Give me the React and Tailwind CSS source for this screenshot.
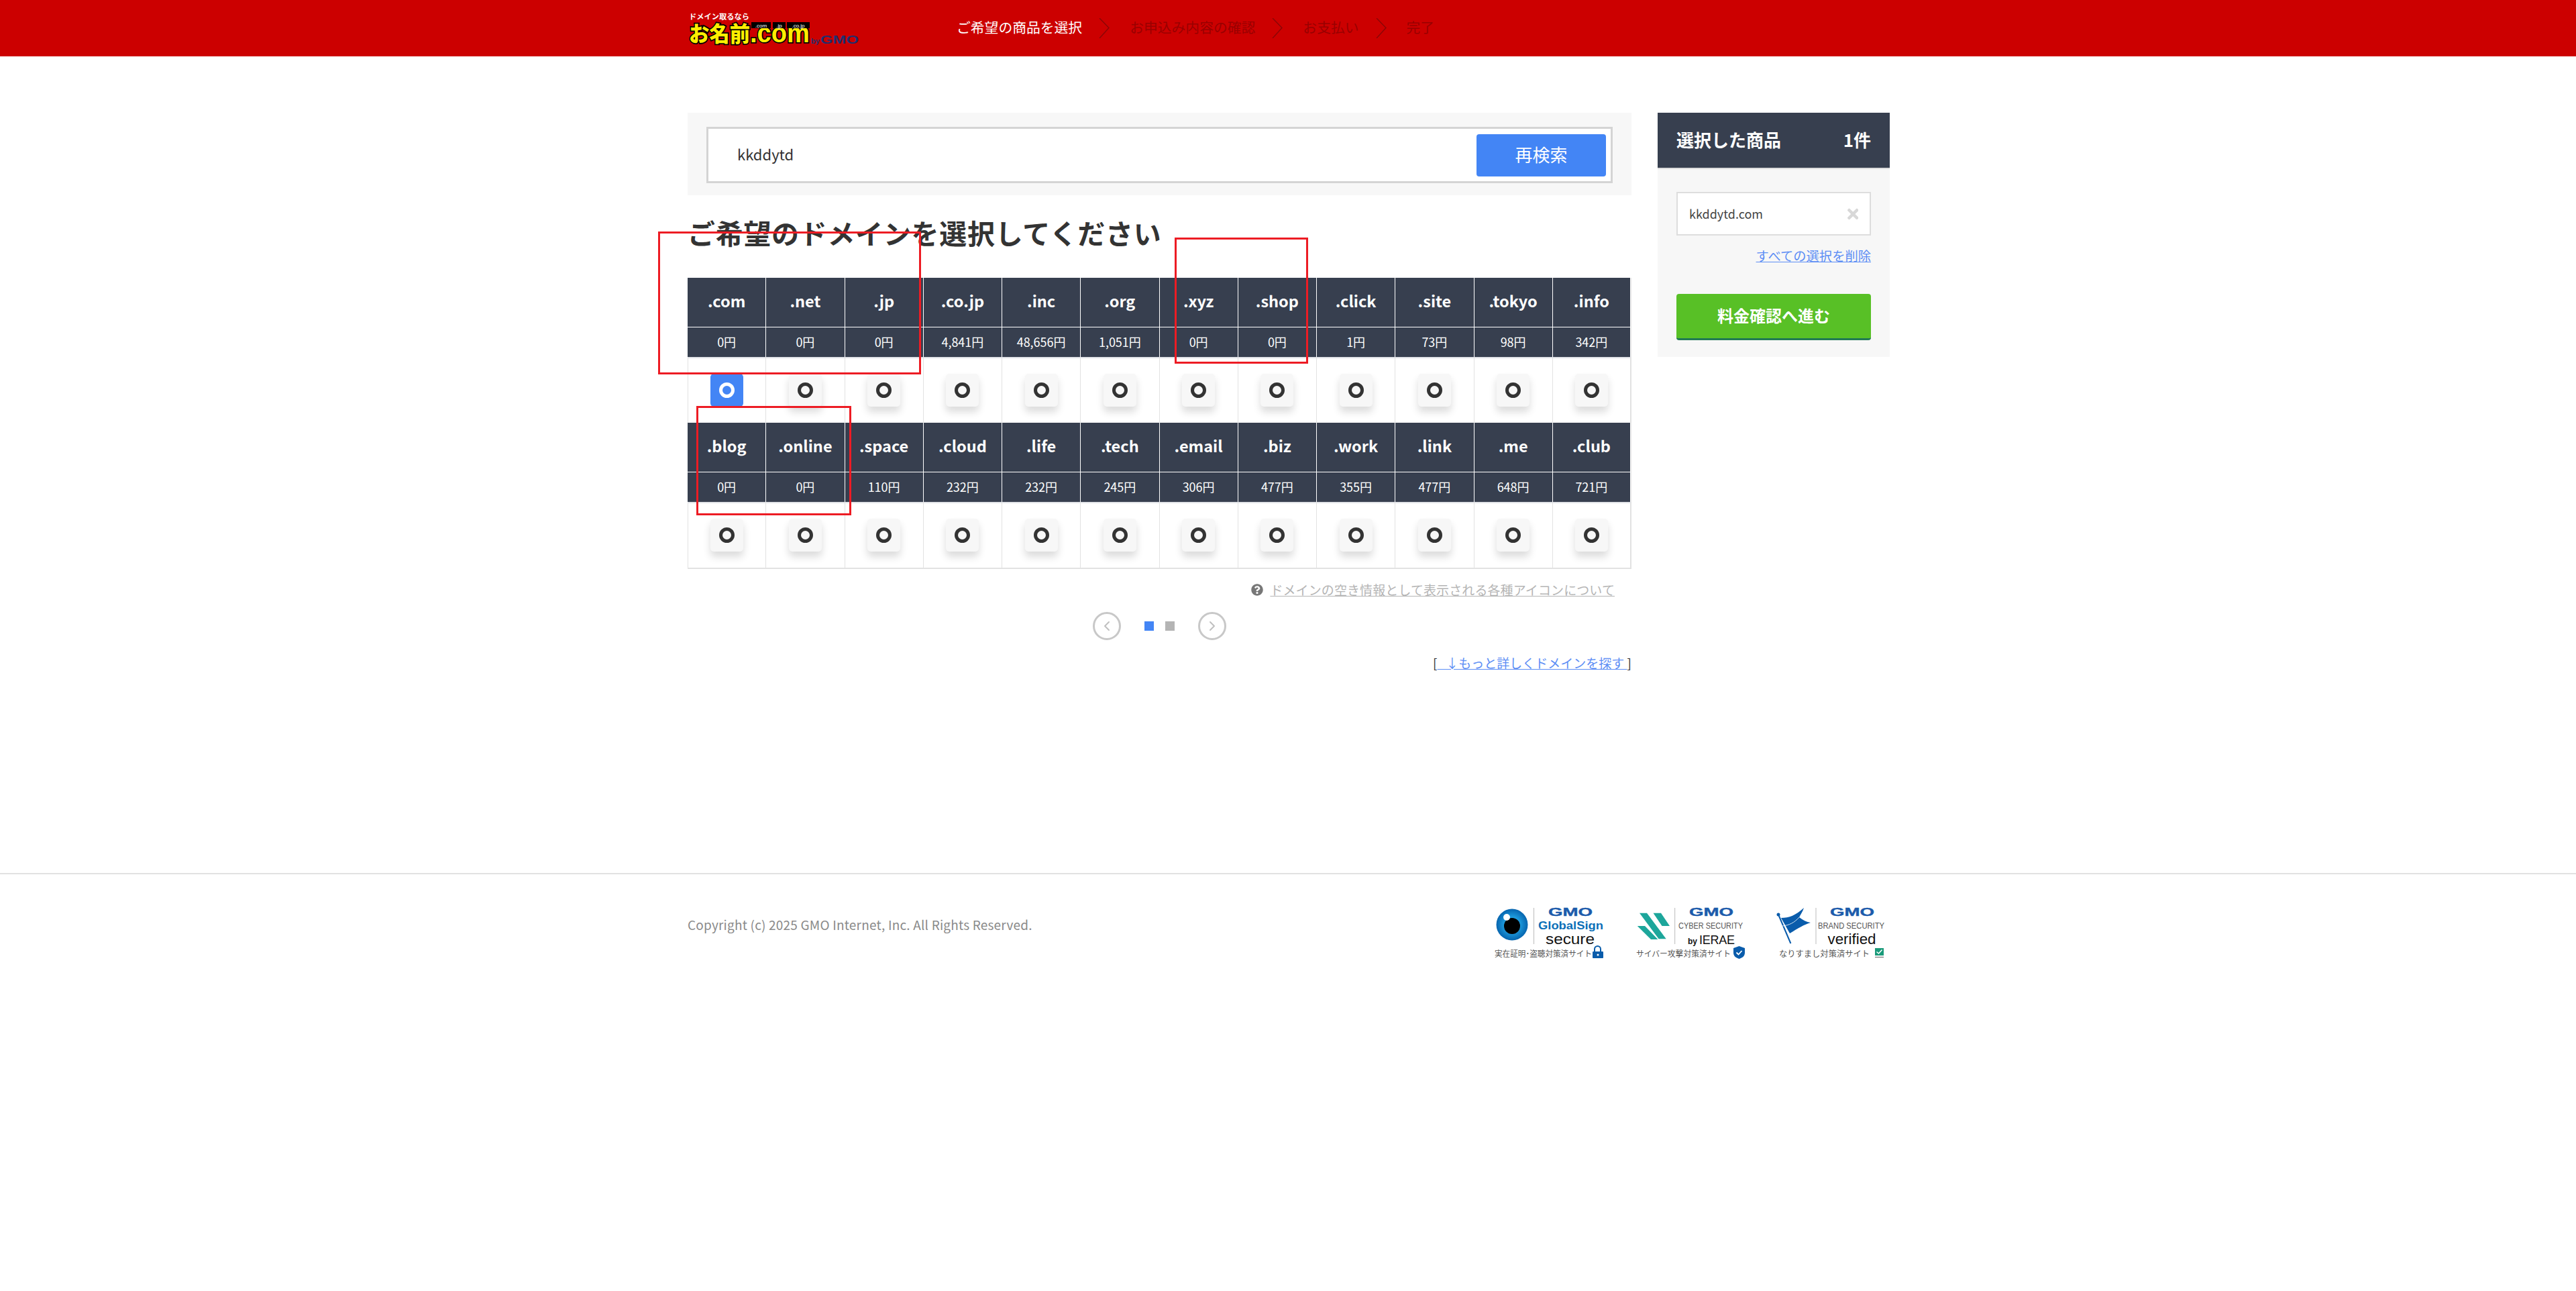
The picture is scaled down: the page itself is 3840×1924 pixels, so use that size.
import { FaQuestionCircle, FaTimes } from "react-icons/fa"
import { ChevronLeft, ChevronRight } from "lucide-react"

const rows = [
  [
    [".com", "0円"], [".net", "0円"], [".jp", "0円"], [".co.jp", "4,841円"], [".inc", "48,656円"], [".org", "1,051円"],
    [".xyz", "0円"], [".shop", "0円"], [".click", "1円"], [".site", "73円"], [".tokyo", "98円"], [".info", "342円"],
  ],
  [
    [".blog", "0円"], [".online", "0円"], [".space", "110円"], [".cloud", "232円"], [".life", "232円"], [".tech", "245円"],
    [".email", "306円"], [".biz", "477円"], [".work", "355円"], [".link", "477円"], [".me", "648円"], [".club", "721円"],
  ],
]

function StepArrow() {
  return (
    <svg width="16" height="30" viewBox="0 0 16 30" fill="none" stroke="#8a0606" strokeWidth="1.4" className="mt-[2px] mr-[30px] ml-[25px] shrink-0">
      <path d="M1 0l14 14.500L1 30" />
    </svg>
  )
}

function Logo() {
  return (
    <svg width="260" height="84" viewBox="0 0 260 84" className="shrink-0">
      <text x="2" y="29" fill="#fff" fontSize="11" fontWeight="700" textLength="90" lengthAdjust="spacingAndGlyphs">ドメイン取るなら</text>
      <text x="2" y="62" fill="#ffee00" stroke="#000" strokeWidth="3.500" paintOrder="stroke" fontSize="32" fontWeight="900" textLength="91" lengthAdjust="spacingAndGlyphs">お名前</text>
      <text x="93" y="63" fill="#ffee00" stroke="#000" strokeWidth="3.500" paintOrder="stroke" fontSize="40" fontWeight="700" fontFamily="Liberation Sans" textLength="89" lengthAdjust="spacingAndGlyphs">.com</text>
      <rect x="95" y="33" width="29" height="9" fill="#000" />
      <rect x="127" y="33" width="19" height="9" fill="#000" />
      <rect x="148" y="33" width="34" height="9" fill="#000" />
      <text x="109.500" y="41" fill="#fff" fontSize="8" textAnchor="middle" fontFamily="Liberation Sans">.com</text>
      <text x="136.500" y="41" fill="#fff" fontSize="8" textAnchor="middle" fontFamily="Liberation Sans">.jp</text>
      <text x="165" y="41" fill="#fff" fontSize="8" textAnchor="middle" fontFamily="Liberation Sans">.co.jp</text>
      <text x="184" y="65" fill="#1d2f6f" fontSize="11" fontWeight="700" fontFamily="Liberation Sans">by</text>
      <text x="198" y="65" fill="#1d2f6f" fontSize="17" fontWeight="700" fontFamily="Liberation Sans" textLength="57" lengthAdjust="spacingAndGlyphs">GMO</text>
    </svg>
  )
}

function DomainRow({ items, first }) {
  return (
    <div className="grid grid-cols-12">
      {items.map(([name, price], i) => (
        <div key={name} className={`flex flex-col ${i === 11 ? "border-r border-r-[#e2e2e2]" : ""}`}>
          <div className="flex h-[74px] items-center justify-center border-r border-b border-white bg-[#373f4f] pb-[4px] text-[23.500px] font-bold text-white">
            {name}
          </div>
          <div className="flex h-[44px] items-center justify-center border-r border-white bg-[#373f4f] pb-[2px] text-[18px] text-white">
            {price}
          </div>
          <div className={`flex h-[98px] items-center justify-center border-t-2 border-r border-t-[#e2e4e8] border-r-[#e2e2e2] pb-[1px] ${i === 0 ? "border-l border-l-[#e2e2e2]" : ""}`}>
            {first && i === 0 ? (
              <span className="flex h-[49px] w-[49px] items-center justify-center rounded-[5px] bg-[#4385f5]">
                <span className="h-[23px] w-[23px] rounded-full border-[5px] border-white" />
              </span>
            ) : (
              <span className="flex h-[49px] w-[49px] items-center justify-center rounded-[5px] bg-[#f7f7f7] shadow-[0_8px_12px_rgba(0,0,0,0.14)]">
                <span className="h-[23px] w-[23px] rounded-full border-[5px] border-[#333]" />
              </span>
            )}
          </div>
        </div>
      ))}
    </div>
  )
}

function GmoMark({ x }) {
  return (
    <text x={x} y="15" fill="#1c5bab" stroke="#1c5bab" strokeWidth="0.400" fontSize="17" fontWeight="700" fontFamily="Liberation Sans" textLength="66" lengthAdjust="spacingAndGlyphs">GMO</text>
  )
}

function Badges() {
  return (
    <div className="flex">
      <svg width="165" height="80" viewBox="0 0 165 80" className="mr-[43px]">
        <defs>
          <radialGradient id="eye">
            <stop offset="0.45" stopColor="#1f9fe0" />
            <stop offset="1" stopColor="#0664ae" />
          </radialGradient>
        </defs>
        <circle cx="26" cy="28" r="23.500" fill="url(#eye)" />
        <circle cx="26" cy="30" r="12" fill="#000" />
        <circle cx="18" cy="17" r="5" fill="#fff" />
        <path d="M58.500 3v54" stroke="#bbb" />
        <GmoMark x="80" />
        <text x="65" y="35" fill="#0a6fb8" fontSize="17" fontWeight="700" fontFamily="Liberation Sans" textLength="97" lengthAdjust="spacingAndGlyphs">GlobalSign</text>
        <text x="76" y="57" fill="#111" fontSize="22" fontFamily="Liberation Sans" textLength="73" lengthAdjust="spacingAndGlyphs">secure</text>
        <text x="0" y="75.500" fill="#555" fontSize="12" textLength="145" lengthAdjust="spacingAndGlyphs">実在証明･盗聴対策済サイト</text>
        <path d="M149 68v-3.500a4.500 4.500 0 0 1 9 0V68" fill="none" stroke="#0a5cab" strokeWidth="2" />
        <rect x="146" y="68" width="16" height="10" rx="1" fill="#0a5cab" />
        <circle cx="154" cy="73" r="1.500" fill="#fff" />
      </svg>
      <svg width="165" height="80" viewBox="0 0 165 80" className="mr-[46px]">
        <path d="M8 10.700h11L47.700 49.300H36.600z" fill="#1da69b" />
        <path d="M28.500 10.700H40L53 30H41.500z" fill="#1da69b" />
        <path d="M4.800 30H16l19.400 20H25z" fill="#1da69b" />
        <path d="M60.700 3v54" stroke="#bbb" />
        <GmoMark x="82" />
        <text x="66" y="33.500" fill="#555" fontSize="13" fontFamily="Liberation Sans" textLength="96" lengthAdjust="spacingAndGlyphs">CYBER SECURITY</text>
        <text x="80" y="56.700" fill="#111" fontSize="12" fontWeight="700" fontFamily="Liberation Sans">by</text>
        <text x="97" y="56.700" fill="#111" fontSize="18" fontFamily="Liberation Sans" textLength="53" lengthAdjust="spacing">IERAE</text>
        <text x="3" y="75.500" fill="#555" fontSize="12" textLength="141" lengthAdjust="spacingAndGlyphs">サイバー攻撃対策済サイト</text>
        <path d="M156.500 60l8.500 3v7c0 4.500-3.500 7.500-8.500 9-5-1.500-8.500-4.500-8.500-9v-7z" fill="#0a5cab" />
        <path d="M152.500 69.500l3 3 5-5.500" fill="none" stroke="#fff" strokeWidth="1.800" />
      </svg>
      <svg width="165" height="80" viewBox="0 0 165 80" className="mr-[5px]">
        <circle cx="4" cy="13" r="2.500" fill="#0a5cab" />
        <path d="M4 13l18.400 43" stroke="#0a5cab" strokeWidth="2" />
        <path d="M8 18c12 0 22-4 34-15-2 6-5 10-7 14 5 4 11 7 17 8-10 3-18 8-31 16z" fill="#0a5cab" />
        <path d="M10 30c10-1 18-5 25-13" fill="none" stroke="#fff" strokeWidth="0.800" />
        <path d="M60 3v54" stroke="#bbb" />
        <GmoMark x="81" />
        <text x="63" y="33.500" fill="#555" fontSize="13" fontFamily="Liberation Sans" textLength="99" lengthAdjust="spacingAndGlyphs">BRAND SECURITY</text>
        <text x="77.500" y="56.700" fill="#111" fontSize="22" fontFamily="Liberation Sans" textLength="72" lengthAdjust="spacingAndGlyphs">verified</text>
        <text x="5" y="75.500" fill="#555" fontSize="12" textLength="135" lengthAdjust="spacingAndGlyphs">なりすまし対策済サイト</text>
        <rect x="148" y="63" width="13" height="11" fill="#1a9a7a" />
        <path d="M150.500 68.500l3 2.500 5-5.500" fill="none" stroke="#fff" strokeWidth="1.500" />
        <path d="M148 76.500h13" stroke="#888" strokeWidth="1.500" />
      </svg>
    </div>
  )
}

export default function App() {
  return (
    <div className="relative min-h-screen bg-white font-['Noto_Sans_CJK_JP',sans-serif] text-[#333]">
      {/* Header */}
      <header className="h-[84px] bg-[#cc0000]">
        <div className="ml-[1025px] flex h-full items-center">
          <Logo />
          <ol className="ml-[141px] flex items-center pb-[3px] text-[20.800px] whitespace-nowrap text-[#990000]">
            <li className="text-white">ご希望の商品を選択</li>
            <StepArrow />
            <li>お申込み内容の確認</li>
            <StepArrow />
            <li>お支払い</li>
            <StepArrow />
            <li>完了</li>
          </ol>
        </div>
      </header>

      <main className="ml-[1025px] flex h-[1217px] w-[1792px] items-start gap-[39px] pt-[84px]">
        <div className="w-[1407px]">
          {/* Search */}
          <div className="h-[123px] bg-[#f7f7f7] px-[28px] pt-[21px]">
            <div className="flex h-[84px] items-center border-[3px] border-[#d4d4d4] bg-white pr-[7px] pl-[43px]">
              <input readOnly defaultValue="kkddytd" className="mb-[4px] min-w-0 flex-1 bg-transparent text-[22px] text-[#333] outline-none" />
              <button className="h-[63px] w-[193px] rounded-[4px] bg-[#4385f5] pb-[3px] text-[26px] text-white">再検索</button>
            </div>
          </div>

          <h1 className="mt-[33px] mb-[46px] text-[41px] leading-[44px] font-bold tracking-[0.700px]">ご希望のドメインを選択してください</h1>

          {/* Domain table */}
          {rows.map((items, i) => (
            <DomainRow key={i} items={items} first={i === 0} />
          ))}
          <div className="h-[2px] bg-[#e2e2e2]" />

          <div className="mt-[17px] flex items-center justify-end gap-[10px] pr-[25px] text-[19px] leading-[28px] tracking-[0.100px] text-[#b5b5b5]">
            <FaQuestionCircle className="h-[18px] w-[18px] text-[#777]" />
            <a className="underline">ドメインの空き情報として表示される各種アイコンについて</a>
          </div>

          {/* Pager */}
          <div className="mt-[19px] flex items-center justify-center">
            <span className="flex h-[42px] w-[42px] items-center justify-center rounded-full border-[3px] border-[#c8c8c8] text-[#c0c0c0]">
              <ChevronLeft size={24} strokeWidth={2} />
            </span>
            <span className="ml-[35px] h-[14px] w-[14px] bg-[#4385f5]" />
            <span className="ml-[17px] h-[14px] w-[14px] bg-[#b4b4b4]" />
            <span className="ml-[35px] flex h-[42px] w-[42px] items-center justify-center rounded-full border-[3px] border-[#c8c8c8] text-[#c0c0c0]">
              <ChevronRight size={24} strokeWidth={2} />
            </span>
          </div>

          <p className="mt-[20px] text-right text-[19px] leading-[28px] whitespace-pre">
            [<a className="text-[#5d8ef5] underline">{"   ↓もっと詳しくドメインを探す "}</a>]
          </p>
        </div>

        {/* Selected items */}
        <aside className="h-[364px] w-[346px] bg-[#f7f7f7]">
          <div className="flex h-[84px] items-center justify-between border-b-2 border-[#dcdcdc] bg-[#373f4f] px-[28px] pb-[3px] text-[26px] font-bold text-white">
            <span>選択した商品</span>
            <span>1件</span>
          </div>
          <div className="px-[28px] pt-[34px]">
            <div className="flex h-[65px] items-center justify-between border-2 border-[#dddddd] bg-white pr-[17px] pl-[17px] text-[18px] text-[#444]">
              <span>kkddytd.com</span>
              <FaTimes className="h-[24px] w-[16.500px] text-[#d8d8d8]" />
            </div>
            <a className="mt-[16px] block text-right text-[19.300px] leading-[28px] text-[#5d8ef5] underline">すべての選択を削除</a>
            <button className="mt-[43px] h-[69px] w-full rounded-[4px] border-b-[3px] border-[#217a55] bg-[#58c026] pb-[3px] text-[24px] font-bold text-white">
              料金確認へ進む
            </button>
          </div>
        </aside>
      </main>

      {/* Footer */}
      <footer className="border-t-2 border-[#e2e2e2] pt-[47px]">
        <div className="ml-[1025px] flex w-[1792px] items-start justify-between">
          <p className="mt-[14px] text-[19px] leading-[28px] tracking-[0.200px] text-[#8a8a8a]">Copyright (c) 2025 GMO Internet, Inc. All Rights Reserved.</p>
          <Badges />
        </div>
      </footer>

      {/* Red annotation boxes over the page */}
      <div className="absolute top-[345px] left-[981px] h-[213px] w-[392px] border-[3px] border-[#ed1c24]" />
      <div className="absolute top-[354px] left-[1751px] h-[188px] w-[199px] border-[3px] border-[#ed1c24]" />
      <div className="absolute top-[605px] left-[1038px] h-[163px] w-[231px] border-[3px] border-[#ed1c24]" />
    </div>
  )
}
